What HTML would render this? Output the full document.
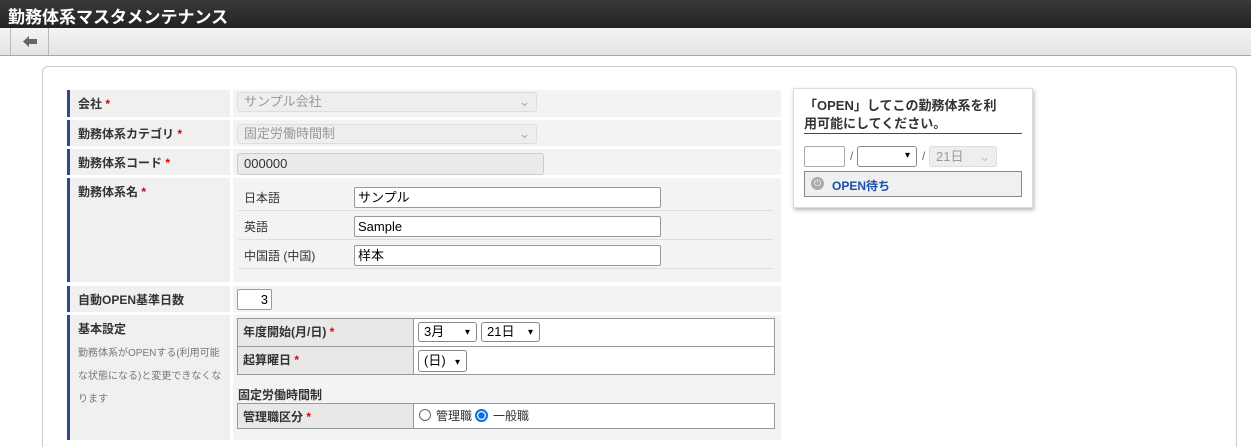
<!DOCTYPE html>
<html style="width:1251px;height:447px;overflow:hidden"><head><meta charset="utf-8"><style>
*{box-sizing:border-box;margin:0;padding:0}
body{width:1251px;height:447px;overflow:hidden;background:#fff;font-family:"Liberation Sans","Noto Sans CJK JP",sans-serif;font-size:12px;color:#333;position:relative}
.a{position:absolute}
.title{left:0;top:0;width:1251px;height:28px;background:linear-gradient(#3a3a3a,#222);color:#fff;font-size:17px;font-weight:bold;padding:3px 0 0 8px}
.tb{left:0;top:28px;width:1251px;height:28px;background:linear-gradient(#f4f4f4,#e4e4e4);border-bottom:1px solid #aaa}
.back{left:10px;top:28px;width:39px;height:27px;border-left:1px solid #bbb;border-right:1px solid #bbb}
.panel{left:42px;top:66px;width:1195px;height:381px;border:1px solid #ccc;border-bottom:none;border-radius:6px 6px 0 0;background:#fff}
.lab{background:#f0f0f0;border-left:3px solid #2c4a8c;font-weight:bold;font-size:12px;padding:5px 0 0 8px;color:#333;width:163px;left:67px}
.val{background:#f3f3f3;left:233px;width:548px}
.req{color:#d00}
.inp{background:#fff;border:1px solid #999;border-radius:2px;font-size:13px;padding:0 3px;color:#000;line-height:19px}
.dis{background:#eee;border:1px solid #ddd;border-radius:3px;color:#999;font-size:13px;padding:2px 6px}
.sel{background:#fff;border:1px solid #888;border-radius:3px;font-size:13px;padding:2px 5px;color:#000}
.chev{position:absolute;right:6px;top:3px;font-size:10px}
.box{border:1px solid #999}
</style></head><body>
<div class="a title">勤務体系マスタメンテナンス</div>
<div class="a tb"></div>
<div class="a back"><svg width="39" height="27"><path d="M12 13.5 L18 8 V11 H26 V16 H18 V19 Z" fill="#666"/></svg></div>
<div class="a panel"></div>

<div class="a lab" style="top:90px;height:27px">会社 <span class="req">*</span></div>
<div class="a val" style="top:90px;height:27px"></div>
<div class="a dis" style="left:237px;top:92px;width:300px;height:20px;font-size:13px;line-height:14px">サンプル会社<span style="position:absolute;right:6px;color:#aaa">⌄</span></div>

<div class="a lab" style="top:120px;height:26px">勤務体系カテゴリ <span class="req">*</span></div>
<div class="a val" style="top:120px;height:26px"></div>
<div class="a dis" style="left:237px;top:124px;width:300px;height:20px;line-height:14px">固定労働時間制<span style="position:absolute;right:6px;color:#aaa">⌄</span></div>

<div class="a lab" style="top:149px;height:26px">勤務体系コード <span class="req">*</span></div>
<div class="a val" style="top:149px;height:26px"></div>
<div class="a dis" style="left:237px;top:153px;width:307px;height:22px;color:#333;background:#eaeaea;border-color:#ccc;line-height:16px">000000</div>

<div class="a lab" style="top:178px;height:104px">勤務体系名 <span class="req">*</span></div>
<div class="a val" style="top:178px;height:104px"></div>
<div class="a" style="left:244px;top:189px;font-size:12px">日本語</div>
<div class="a" style="left:244px;top:218px">英語</div>
<div class="a" style="left:244px;top:247px">中国語 (中国)</div>
<div class="a" style="left:238px;top:210px;width:535px;border-top:1px solid #ddd"></div>
<div class="a" style="left:238px;top:239px;width:535px;border-top:1px solid #ddd"></div>
<div class="a" style="left:238px;top:268px;width:535px;border-top:1px solid #ddd"></div>
<div class="a inp" style="left:354px;top:187px;width:307px;height:21px">サンプル</div>
<div class="a inp" style="left:354px;top:216px;width:307px;height:21px">Sample</div>
<div class="a inp" style="left:354px;top:245px;width:307px;height:21px">样本</div>

<div class="a lab" style="top:286px;height:26px">自動OPEN基準日数</div>
<div class="a val" style="top:286px;height:26px"></div>
<div class="a inp" style="left:237px;top:289px;width:35px;height:21px;text-align:right">3</div>

<div class="a lab" style="top:315px;height:125px">基本設定
<div style="font-weight:normal;font-size:10px;color:#777;line-height:23px;margin-top:5px;width:150px">勤務体系がOPENする(利用可能な状態になる)と変更できなくなります</div></div>
<div class="a val" style="top:315px;height:125px"></div>
<div class="a box" style="left:237px;top:318px;width:538px;height:57px;background:#fff"></div>
<div class="a" style="left:238px;top:319px;width:176px;height:55px;background:#e8e8e8;border-right:1px solid #999"></div>
<div class="a" style="left:238px;top:346px;width:537px;border-top:1px solid #999"></div>
<div class="a" style="left:243px;top:323px;font-weight:bold">年度開始(月/日) <span class="req">*</span></div>
<div class="a" style="left:243px;top:351px;font-weight:bold">起算曜日 <span class="req">*</span></div>
<div class="a sel" style="left:418px;top:322px;width:59px;height:20px;line-height:14px">3月<span class="chev">▾</span></div>
<div class="a sel" style="left:481px;top:322px;width:59px;height:20px;line-height:14px">21日<span class="chev">▾</span></div>
<div class="a sel" style="left:418px;top:350px;width:49px;height:22px;line-height:16px">(日)<span class="chev" style="top:4px">▾</span></div>
<div class="a" style="left:238px;top:386px;font-weight:bold">固定労働時間制</div>
<div class="a box" style="left:237px;top:403px;width:538px;height:26px;background:#fff"></div>
<div class="a" style="left:238px;top:404px;width:176px;height:24px;background:#e8e8e8;border-right:1px solid #999"></div>
<div class="a" style="left:243px;top:408px;font-weight:bold">管理職区分 <span class="req">*</span></div>
<div class="a" style="left:419px;top:409px;width:12px;height:12px;border:1px solid #666;border-radius:50%"></div>
<div class="a" style="left:436px;top:407px">管理職</div>
<div class="a" style="left:475px;top:409px;width:13px;height:13px;border:2px solid #0a6fe0;border-radius:50%;background:radial-gradient(#0a6fe0 3px,#fff 3.5px)"></div>
<div class="a" style="left:493px;top:407px">一般職</div>

<div class="a" style="left:793px;top:88px;width:240px;height:120px;background:#fff;border:1px solid #ddd;box-shadow:1px 2px 4px rgba(0,0,0,.3)"></div>
<div class="a" style="left:804px;top:97px;width:218px;height:37px;border-bottom:1px solid #2c4a8c"></div>
<div class="a" style="left:804px;top:97px;width:218px;font-size:13px;font-weight:bold;line-height:18px">「OPEN」してこの勤務体系を利<br>用可能にしてください。</div>
<div class="a inp" style="left:804px;top:146px;width:41px;height:21px;border-color:#aaa"></div>
<div class="a" style="left:850px;top:149px;color:#666">/</div>
<div class="a sel" style="left:857px;top:146px;width:60px;height:21px"><span class="chev">▾</span></div>
<div class="a" style="left:922px;top:149px;color:#666">/</div>
<div class="a dis" style="left:929px;top:146px;width:68px;height:21px;line-height:15px">21日<span style="position:absolute;right:6px;color:#bbb">⌄</span></div>
<div class="a" style="left:804px;top:171px;width:218px;height:26px;border:1px solid #888;background:#f0f0f0"></div>
<div class="a" style="left:811px;top:177px;width:13px;height:13px;border-radius:50%;background:#aaa;color:#fff;font-size:9px;text-align:center;line-height:13px">⏻</div>
<div class="a" style="left:832px;top:177px;color:#1a4fb0;font-weight:bold">OPEN待ち</div>
</body></html>
